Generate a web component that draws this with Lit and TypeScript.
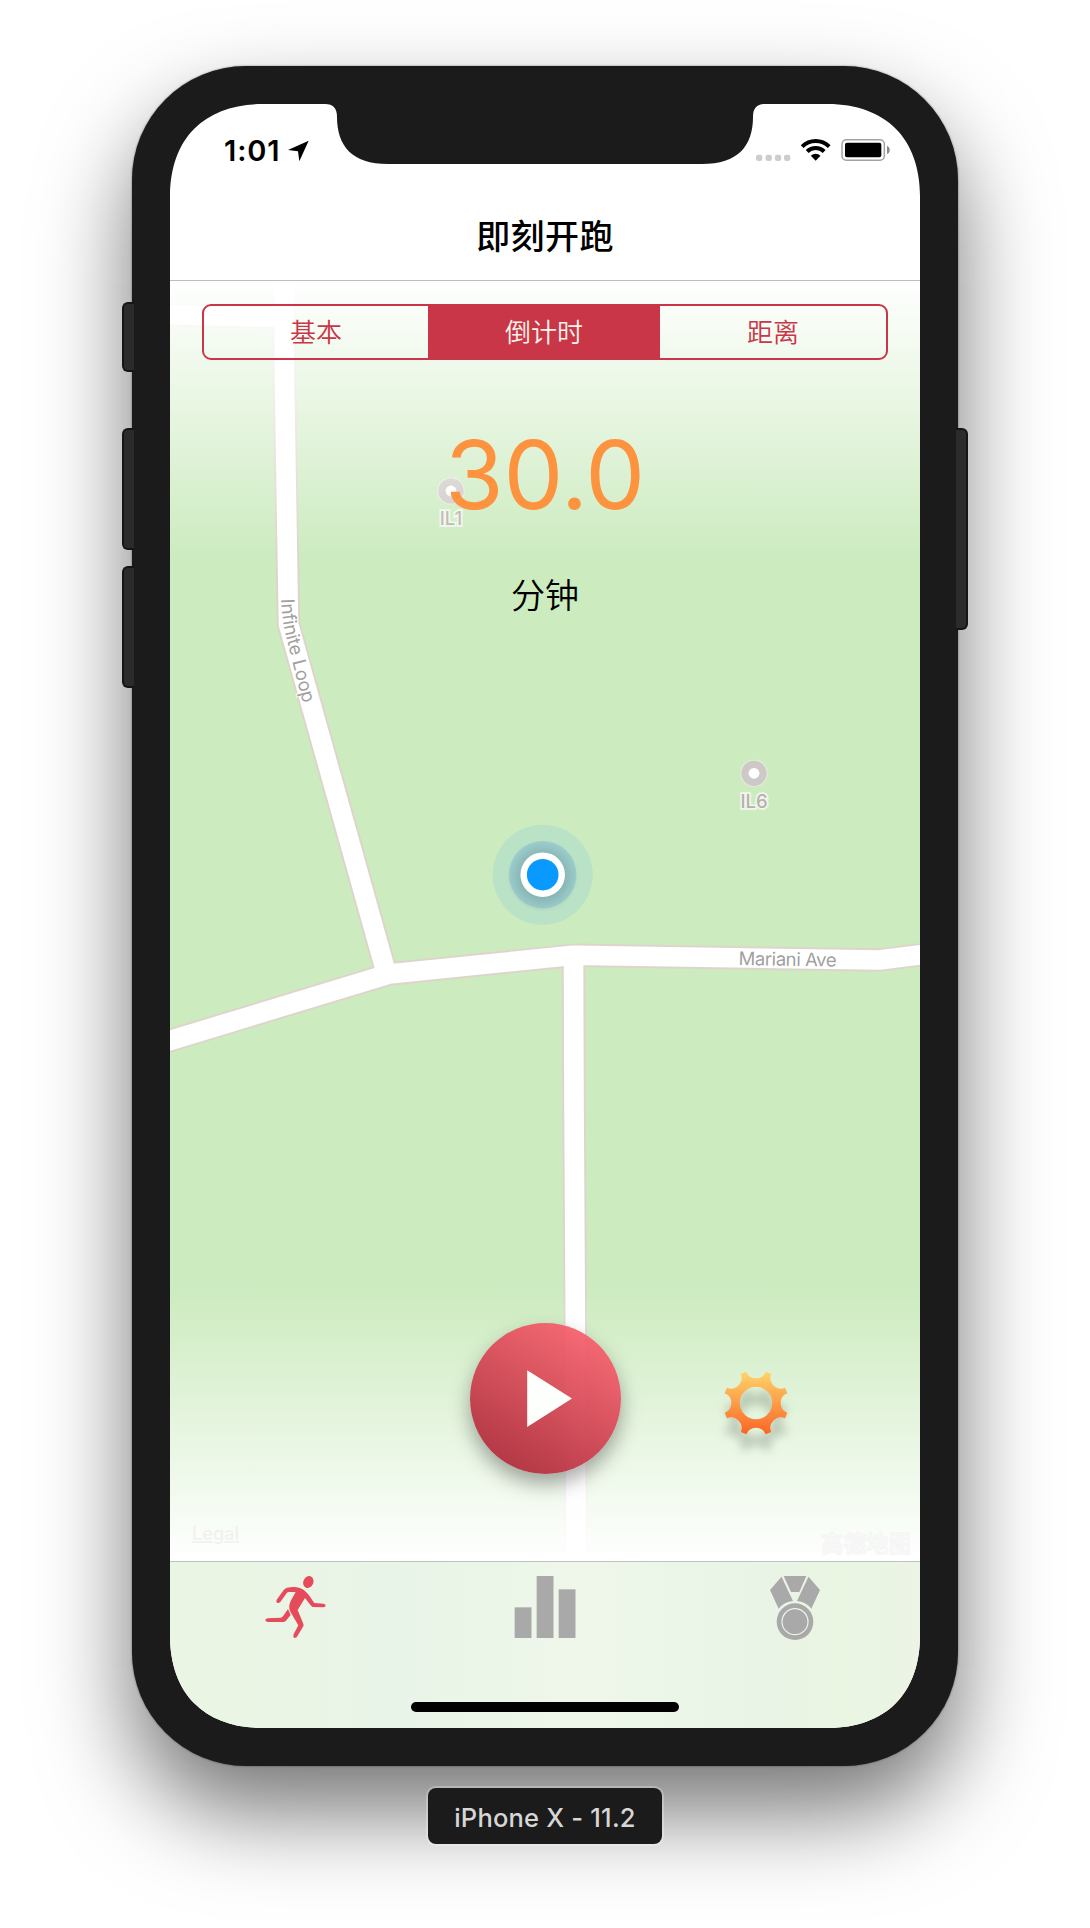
import { LitElement, html, svg, css } from "lit";
import { customElement, property } from "lit/decorators.js";

const ROADS = [
  "M160 314.5 L284 317.5",
  "M284 270 L284.5 380 L288.5 624 L386 972",
  "M573.5 957 L574 1100 L575.2 1300 L576 1570",
  "M150 1046.5 L170 1040.5 L389 974 L573.5 955.3 L879 960 L940 952.5",
];

/** Eight-toothed cog with scooped gaps, centred on the origin. */
function cogPath(): string {
  const at = (deg: number) => {
    const a = (deg * Math.PI) / 180;
    return `${(32.8 * Math.sin(a)).toFixed(2)} ${(-32.8 * Math.cos(a)).toFixed(2)}`;
  };
  let d = "";
  for (let k = 0; k < 8; k++) {
    d += `${k ? "L" : "M"}${at(k * 45 - 17.2)} A10.4 10.4 0 0 0 ${at(k * 45 + 17.2)} `;
  }
  return d + "Z M16.2 0 A16.2 16.2 0 1 0 -16.2 0 A16.2 16.2 0 1 0 16.2 0 Z";
}

@customElement("status-bar")
class StatusBar extends LitElement {
  static styles = css`
    :host {
      display: flex;
      justify-content: space-between;
      height: 88px;
      box-sizing: border-box;
      padding: 31px 29px 0 54px;
      color: #000;
    }
    .left, .right { display: flex; align-items: flex-start; }
    .time {
      font: 600 29px/32px Inter, "Liberation Sans", sans-serif;
      letter-spacing: 0.9px;
    }
    .arrow { margin: 5px 0 0 6px; }
    svg { display: block; }
  `;
  render() {
    return html`
      <div class="left">
        <span class="time">1:01</span>
        <svg class="arrow" width="23" height="22" viewBox="562 302 69 66">
          <path d="M565 332 L627 304 L599 366 L595 336 Z" />
        </svg>
      </div>
      <div class="right">
        <svg width="136" height="32" viewBox="588 285 408 96">
          <g fill="#cdcdcd">
            ${[591, 619.5, 647.5, 675].map((x) => svg`<rect x=${x} y="344" width="19" height="19" rx="7" />`)}
          </g>
          <g fill="none" stroke="#000" stroke-width="12">
            <path d="M729.5 320 A57 57 0 0 1 810.5 320" />
            <path d="M744.5 334.5 A36 36 0 0 1 795.5 334.5" />
          </g>
          <path d="M755.5 347 A21 21 0 0 1 784.5 347 L770 362 Z" />
          <rect x="849" y="299" width="127" height="62" rx="13" fill="none" stroke="#a3a3a3" stroke-width="4.5" />
          <rect x="858" y="308" width="109" height="44" rx="6" />
          <path d="M984 317 C995 322 995 338 984 342 Z" fill="#8c8c8c" />
        </svg>
      </div>
    `;
  }
}

@customElement("mode-switch")
class ModeSwitch extends LitElement {
  @property({ type: Array }) modes: string[] = [];
  @property({ type: Number }) active = 0;
  static styles = css`
    :host {
      display: grid;
      grid-template-columns: 224px 232px 226px;
      box-sizing: border-box;
      width: 686px;
      height: 56px;
      border: 2px solid #c93647;
      border-radius: 9px;
      overflow: hidden;
      color: #c93647;
      font: 350 26px/50px "Noto Sans CJK SC", sans-serif;
      text-align: center;
    }
    .on { background: #c93647; color: #f8f3ea; padding-bottom: 2px; }
  `;
  render() {
    return html`${this.modes.map((m, i) => html`<div class=${i === this.active ? "on" : "off"}>${m}</div>`)}`;
  }
}

@customElement("run-map")
class RunMap extends LitElement {
  static styles = css`
    :host { display: block; }
    svg { display: block; }
    .road { fill: none; stroke-linejoin: round; }
    .casing { stroke: #dfd4cc; stroke-width: 23.4; }
    .fill { stroke: #fff; stroke-width: 19.6; }
    .street {
      font: 400 18.5px Inter, sans-serif;
      font-variant-ligatures: none;
      fill: #a2a0a0;
      stroke: #fff;
      stroke-width: 2px;
      paint-order: stroke;
    }
    .poi {
      font: 550 18.5px Inter, sans-serif;
      fill: #b7b0ad;
      stroke: #f1f6ec;
      stroke-width: 3.6px;
      paint-order: stroke;
      text-anchor: middle;
    }
    .legal { font: 500 18px Inter, sans-serif; fill: #f1f2f0; text-decoration: underline; }
    .brand { font: 500 22.5px "Noto Sans CJK SC", sans-serif; fill: #fdfdfd; stroke: #f4f5f4; stroke-width: 1.1px; }
  `;
  render() {
    return html`
      <svg width="750" height="1280" viewBox="170 281 750 1280">
        <defs>
          <linearGradient id="top" x1="0" y1="0" x2="0" y2="1">
            <stop offset="0" stop-color="#fff" />
            <stop offset="1" stop-color="#fff" stop-opacity="0" />
          </linearGradient>
          <linearGradient id="bottom" x1="0" y1="1" x2="0" y2="0">
            <stop offset="0" stop-color="#fff" />
            <stop offset="1" stop-color="#fff" stop-opacity="0" />
          </linearGradient>
          <radialGradient id="glow">
            <stop offset="0.6" stop-color="#54706c" stop-opacity="0.27" />
            <stop offset="1" stop-color="#54706c" stop-opacity="0" />
          </radialGradient>
          <path id="loop" d="M281 599 Q282 623 288 644 L294 668 L303.5 705 L310 731" />
        </defs>
        <rect x="170" y="281" width="750" height="1280" fill="#ccebbf" />
        ${ROADS.map((d) => svg`<path class="road casing" d=${d} />`)}
        ${ROADS.map((d) => svg`<path class="road fill" d=${d} />`)}
        <text class="street" textLength="107"><textPath href="#loop">Infinite Loop</textPath></text>
        <text class="street" x="738.5" y="965" textLength="98" transform="rotate(0.9 738 965)">Mariani Ave</text>
        ${[{ x: 451, y: 491, n: "IL1" }, { x: 754, y: 773.3, n: "IL6" }].map(
          (p) => svg`
            <circle cx=${p.x} cy=${p.y} r="9" fill="none" stroke="#e3eadc" stroke-width="9.5" />
            <circle cx=${p.x} cy=${p.y} r="12.6" fill="#cec9c6" />
            <circle cx=${p.x} cy=${p.y} r="5.4" fill="#fff" />
            <text class="poi" x=${p.x} y=${p.y + 34.4}>${p.n}</text>`
        )}
        <circle cx="542.7" cy="874.7" r="50" fill="#bae2c6" />
        <circle cx="542.7" cy="874.7" r="33.7" fill="#9dd0d0" />
        <circle cx="542.7" cy="876" r="36" fill="url(#glow)" />
        <circle cx="542.7" cy="874.7" r="22.3" fill="#fff" />
        <circle cx="542.7" cy="874.7" r="15.8" fill="#0a99fe" />
        <rect x="170" y="281" width="750" height="280" fill="url(#top)" />
        <rect x="170" y="1285" width="750" height="276" fill="url(#bottom)" />
        <text class="legal" x="192" y="1540" textLength="47">Legal</text>
        <text class="brand" x="821" y="1552">高德地图</text>
      </svg>
    `;
  }
}

@customElement("tab-bar")
class TabBar extends LitElement {
  static styles = css`
    :host {
      display: flex;
      flex-direction: column;
      align-items: center;
      box-sizing: border-box;
      height: 168px;
      border-top: 1px solid #bfc3bf;
      background: linear-gradient(90deg, #eaf5e3 0, #ebf5e5 14%, #e9f4e8 28%, #ebf5e8 44%, #eff7eb 54%, #ebf5e8 68%, #e9f4e6 80%, #eaf5e2 90%, #ebf4e5);
    }
    .tabs { display: grid; grid-template-columns: repeat(3, 250px); justify-items: center; height: 140px; }
    .tab { display: block; margin-top: 13px; }
    .home { width: 268px; height: 10px; border-radius: 5px; background: #000; }
  `;
  render() {
    return html`
      <div class="tabs">
        <svg class="tab" width="62.67" height="64" viewBox="311 225 188 192">
          <g fill="#e64b5b">
            <ellipse cx="444" cy="246" rx="15" ry="18.5" transform="rotate(22 444 246)" />
            <path d="M380 263 C395 260 408 261 416 263 C428 266 440 277 446 286 L462 309 L490 311 Q496 313 496 317 Q495 321 489 321.5 L457 321 Q453 320 451 316 L434 294 L412 330 L428 369 Q431 374 429 379 L410 410 Q406 415 400 413 Q398 408 400 403 L414 376 L390 335 C385 326 386 314 391 303 L406 276 L386 276 Q382 276 379 280 L360 306 Q355 311 350 308 Q346 304 349 299 L370 270 Q374 265 380 263 Z" />
            <path d="M383 327 L391 345 L377 362 Q373 366 367 366 L322 366 Q315 365 315 361 Q315 356 322 355 L361 353 Q365 353 368 349 Z" />
          </g>
        </svg>
        <svg class="tab" width="62" height="64" viewBox="1063 225 186 192" fill="#a9a9a9">
          <rect x="1065" y="322" width="50.5" height="92" />
          <rect x="1131" y="228" width="50.5" height="186" />
          <rect x="1197" y="268" width="50.5" height="146" />
        </svg>
        <svg class="tab" width="52" height="66" viewBox="387 222 156 198" fill="#a9a9a9">
          <path d="M431 225 H499 L478 273 H453 Z" />
          <path d="M424.5 227 L459 300 A62 62 0 0 0 416 323 L390 267 Z" />
          <path d="M505.5 227 L471 300 A62 62 0 0 1 514 323 L540 267 Z" />
          <circle cx="465" cy="362" r="55" />
          <circle cx="465" cy="362" r="39" fill="none" stroke="#ecf5e9" stroke-width="3.5" />
        </svg>
      </div>
      <div class="home"></div>
    `;
  }
}

@customElement("app-root")
class AppRoot extends LitElement {
  static styles = css`
    :host {
      display: flex;
      flex-direction: column;
      align-items: center;
      box-sizing: border-box;
      width: 1090px;
      height: 1928px;
      padding-top: 66px;
      background: #fff;
      overflow: hidden;
    }
    .phone {
      position: relative;
      box-sizing: border-box;
      width: 826px;
      height: 1700px;
      flex: none;
      padding: 38px;
      border-radius: 114px;
      background: #1b1b1b;
      box-shadow: 0 0 2px rgba(0, 0, 0, 0.5), 0 46px 92px rgba(0, 0, 0, 0.54);
    }
    .key {
      position: absolute;
      box-sizing: border-box;
      width: 12px;
      background: #2b2b2b;
      border: 2px solid #151515;
    }
    .key.l { left: -10px; border-radius: 6px 0 0 6px; border-right: 0; }
    .key.r { right: -10px; border-radius: 0 6px 6px 0; border-left: 0; }
    .mute { top: 236px; height: 70px; }
    .up { top: 362px; height: 122px; }
    .down { top: 500px; height: 122px; }
    .power { top: 362px; height: 202px; }
    .screen {
      display: flex;
      flex-direction: column;
      width: 750px;
      height: 1624px;
      background: #fff;
      clip-path: path("M0 92 C0 64 8.5 40.5 24.5 24.5 C40.5 8.5 64 0 92 0 L155 0 C163 0 167 4 167 13 C167 42 182 60 218 60 L532 60 C568 60 583 42 583 13 C583 4 587 0 595 0 L658 0 C686 0 709.5 8.5 725.5 24.5 C741.5 40.5 750 64 750 92 L750 1532 C750 1560 741.5 1583.5 725.5 1599.5 C709.5 1615.5 686 1624 658 1624 L92 1624 C64 1624 40.5 1615.5 24.5 1599.5 C8.5 1583.5 0 1560 0 1532 Z");
    }
    .nav {
      box-sizing: border-box;
      height: 89px;
      border-bottom: 1px solid #bdbdbd;
      text-align: center;
      font: 500 34px/85px "Noto Sans CJK SC", sans-serif;
      letter-spacing: 0.4px;
    }
    .stage { display: grid; height: 1280px; }
    .stage > * { grid-area: 1 / 1; }
    .content { z-index: 1; display: flex; flex-direction: column; align-items: center; padding-top: 23px; }
    .value {
      margin-top: 57px;
      font: 400 95px/115px Inter, sans-serif;
      letter-spacing: -0.3px;
      color: #fd933f;
    }
    .unit { margin-top: 37px; font: 350 34px/50px "Noto Sans CJK SC", sans-serif; color: #000; }
    .controls {
      display: grid;
      grid-template-columns: 1fr 151px 1fr;
      width: 100%;
      margin-top: auto;
      margin-bottom: 87px;
      align-items: center;
    }
    .play {
      grid-column: 2;
      width: 151px;
      height: 151px;
      border-radius: 50%;
      background: linear-gradient(211deg, rgba(250, 100, 112, 0.94) 8%, rgba(168, 38, 54, 0.94) 96%);
      box-shadow: 0 10px 20px rgba(0, 0, 0, 0.34);
    }
    .cog { justify-self: start; margin: 9px 0 0 101px; overflow: visible; filter: drop-shadow(0 17px 5px rgba(0, 0, 0, 0.19)); }
    .label {
      margin-top: 22px;
      z-index: 1;
      box-sizing: border-box;
      width: 234px;
      height: 56px;
      border-radius: 8px;
      background: #1b1b1b;
      box-shadow: 0 0 0 2px rgba(255, 255, 255, 0.25);
      color: #d6d6d6;
      font: 500 25.5px/59px Inter, sans-serif;
      letter-spacing: 0.2px;
      text-align: center;
      white-space: nowrap;
    }
  `;
  render() {
    return html`
      <div class="phone">
        <div class="key l mute"></div>
        <div class="key l up"></div>
        <div class="key l down"></div>
        <div class="key r power"></div>
        <div class="screen">
          <status-bar></status-bar>
          <div class="nav">即刻开跑</div>
          <div class="stage">
            <run-map></run-map>
            <div class="content">
              <mode-switch .modes=${["基本", "倒计时", "距离"]} .active=${1}></mode-switch>
              <div class="value">30.0</div>
              <div class="unit">分钟</div>
              <div class="controls">
                <svg class="play" viewBox="469.8 1323.2 151 151">
                  <path d="M527 1370.5 L571.8 1398.8 L527 1427.3 Z" fill="#fdfffc" />
                </svg>
                <svg class="cog" width="68" height="68" viewBox="-34 -34 68 68">
                  <defs>
                    <linearGradient id="amber" x1="0" y1="0" x2="0" y2="1">
                      <stop offset="0" stop-color="#ffd56a" />
                      <stop offset="1" stop-color="#fb6424" />
                    </linearGradient>
                  </defs>
                  <path d=${cogPath()} fill="url(#amber)" fill-rule="evenodd" />
                </svg>
              </div>
            </div>
          </div>
          <tab-bar></tab-bar>
        </div>
      </div>
      <div class="label">iPhone X - 11.2</div>
    `;
  }
}
